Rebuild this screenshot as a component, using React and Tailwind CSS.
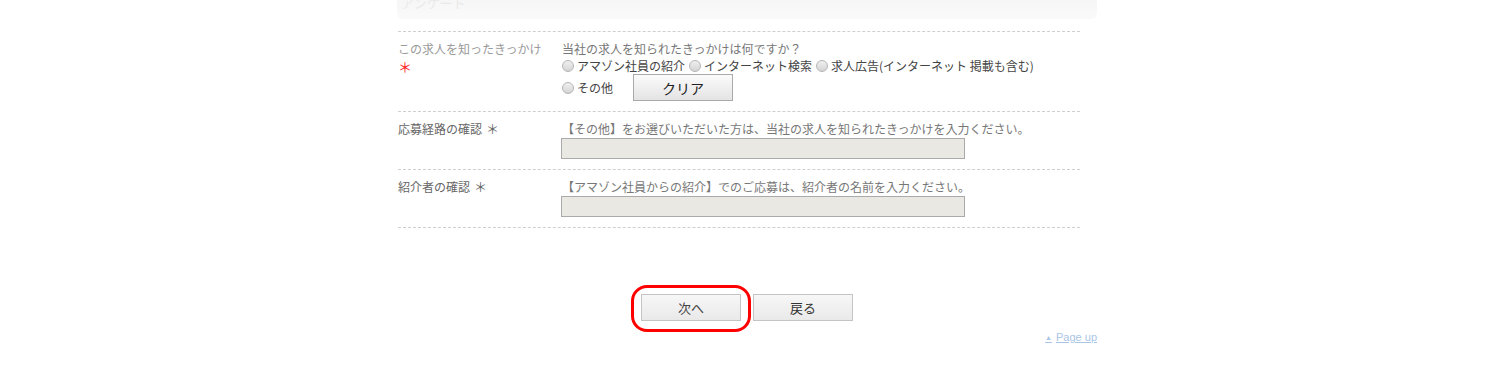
import React, { useState } from "react";

const font = { fontFamily: '"Noto Sans CJK JP", "Noto Sans", sans-serif' };

const Radio = ({ label, checked, onClick }) => (
  <label className="inline-flex items-center cursor-pointer mr-[4px]" onClick={onClick}>
    <span className="w-[12px] h-[12px] rounded-full border border-[#b5b5b5] bg-gradient-to-b from-[#f0f0f0] to-[#d4d4d4] flex items-center justify-center mr-[3px]">
      {checked && <span className="w-[4px] h-[4px] rounded-full bg-[#333]" />}
    </span>
    <span className="text-[#444]">{label}</span>
  </label>
);

const Row = ({ label, required, redMark, children, labelColor = "text-[#666]" }) => (
  <div className="flex border-t border-dashed border-[#cfcfcf] pt-[8px] pb-[10px]">
    <div className={`w-[164px] shrink-0 leading-[18px] ${labelColor}`}>
      {label}
      {required && <span className="ml-[4px] text-[13px]">＊</span>}
      {redMark && <div className="text-[#ff2020] text-[14px] leading-[16px]">＊</div>}
    </div>
    <div className="flex-1">{children}</div>
  </div>
);

export default function App() {
  const [source, setSource] = useState("");
  const options = ["アマゾン社員の紹介", "インターネット検索", "求人広告(インターネット 掲載も含む)"];

  return (
    <div className="min-h-[375px] bg-white text-[12px]" style={font}>
      <div className="w-[700px] ml-[397px]">
        <div className="h-[18px] bg-gradient-to-b from-[#f6f6f6] to-[#fafafa] rounded-b-[6px] shadow-[0_1px_1px_rgba(0,0,0,0.03)] overflow-hidden px-[4px]">
          <div className="-mt-[5px] text-[13px] leading-[16px] text-[#eaeaea]">アンケート</div>
        </div>

        <div className="mt-[13px] ml-[1px] w-[682px] border-b border-dashed border-[#cfcfcf]">
          <Row label="この求人を知ったきっかけ" redMark labelColor="text-[#9a9a9a]">
            <div className="leading-[18px] text-[#777]">当社の求人を知られたきっかけは何ですか？</div>
            <div className="flex items-center leading-[16px]">
              {options.map((o) => (
                <Radio key={o} label={o} checked={source === o} onClick={() => setSource(o)} />
              ))}
            </div>
            <div className="flex items-center leading-[16px]">
              <Radio label="その他" checked={source === "その他"} onClick={() => setSource("その他")} />
              <button
                type="button"
                onClick={() => setSource("")}
                className="ml-[16px] w-[100px] h-[27px] border border-[#a9a9a9] bg-gradient-to-b from-[#fbfbfb] to-[#e4e4e4] text-[14px] text-[#222]"
              >
                クリア
              </button>
            </div>
          </Row>

          <Row label="応募経路の確認" required>
            <div className="leading-[18px] text-[#777]">
              【その他】をお選びいただいた方は、当社の求人を知られたきっかけを入力ください。
            </div>
            <input className="block -ml-[1px] w-[404px] h-[21px] border border-[#aaa] bg-[#e9e8e2] outline-none" />
          </Row>

          <Row label="紹介者の確認" required>
            <div className="leading-[18px] text-[#777]">
              【アマゾン社員からの紹介】でのご応募は、紹介者の名前を入力ください。
            </div>
            <input className="block -ml-[1px] w-[404px] h-[21px] border border-[#aaa] bg-[#e9e8e2] outline-none" />
          </Row>
        </div>

        <div className="mt-[66px] flex justify-center gap-[12px]">
          <div className="relative">
            <button
              type="button"
              className="w-[100px] h-[27px] border border-[#c4c4c4] bg-gradient-to-b from-[#f7f7f7] to-[#e9e9e9] text-[13px] text-[#444]"
            >
              次へ
            </button>
            <div className="absolute -left-[10px] -top-[9px] w-[120px] h-[47px] border-[3px] border-[#ff0000] rounded-[16px] pointer-events-none" />
          </div>
          <button
            type="button"
            className="w-[100px] h-[27px] border border-[#c4c4c4] bg-gradient-to-b from-[#f7f7f7] to-[#e9e9e9] text-[13px] text-[#333]"
          >
            戻る
          </button>
        </div>

        <div className="mt-[9px] flex justify-end">
          <a href="#" className="text-[11px] leading-[14px] text-[#a9c6e6] underline" style={{ fontFamily: '"Liberation Sans", Arial, sans-serif' }}>
            <span className="text-[7px] align-middle mr-[4px] no-underline">▲</span>Page up
          </a>
        </div>
      </div>
    </div>
  );
}
